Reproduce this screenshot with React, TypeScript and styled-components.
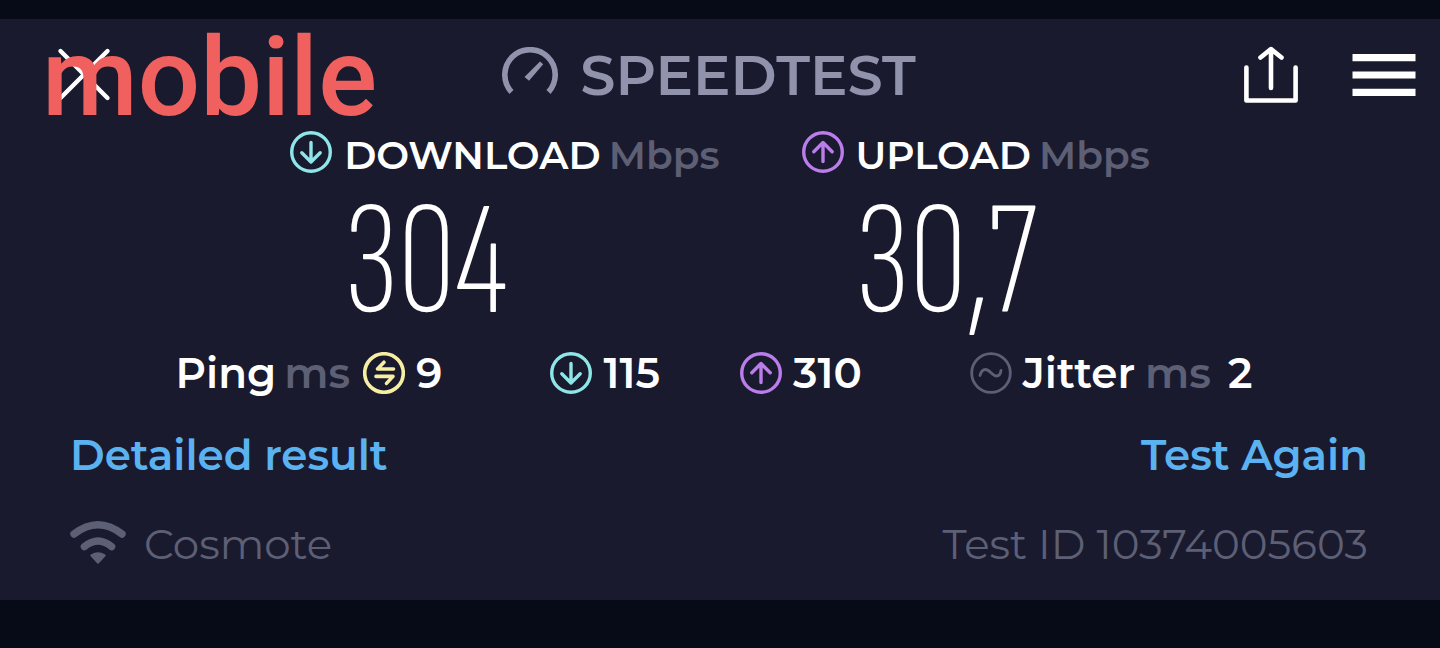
import React from "react";
import styled, { createGlobalStyle } from "styled-components";

const colors = {
  frame: "#070a17",
  panel: "#191a2e",
  white: "#ffffff",
  muted: "#5d5f75",
  brand: "#9193ad",
  cyan: "#8ee6e8",
  purple: "#bb7deb",
  yellow: "#f6eea2",
  link: "#5bb2f1",
  coral: "#ef605e",
};

const GlobalStyle = createGlobalStyle`
  *, *::before, *::after { box-sizing: border-box; }
  body {
    margin: 0;
    background: ${colors.frame};
    color: ${colors.white};
    font-family: Montserrat, Inter, "Liberation Sans", sans-serif;
  }
  svg { display: block; flex: none; }
`;

const Page = styled.div`
  min-height: 100vh;
  padding: 19px 0 48px;
`;

const Panel = styled.main`
  display: flex;
  flex-direction: column;
  background: ${colors.panel};
  padding-bottom: 32px;
`;

const Header = styled.header`
  position: relative;
  display: grid;
  grid-template-columns: 1fr auto 1fr;
  align-items: center;
  height: 112px;
  padding: 0 24px;
`;

const IconButton = styled.button`
  padding: 0;
  border: 0;
  background: none;
  color: ${colors.white};
  cursor: pointer;
`;

const CloseButton = styled(IconButton)`
  justify-self: start;
  margin-left: 32px;
`;

const Overlay = styled.span`
  position: absolute;
  left: 42px;
  top: 4px;
  font: 500 110px/110px Roboto, sans-serif;
  color: ${colors.coral};
  pointer-events: none;
`;

const Brand = styled.h1`
  display: flex;
  align-items: center;
  gap: 22px;
  margin: 0;
  padding-right: 22px;
  font-size: 56px;
  line-height: 64px;
  font-weight: 600;
  color: ${colors.brand};
`;

const Actions = styled.div`
  display: flex;
  align-items: center;
  justify-content: flex-end;
  gap: 53px;
`;

const Speeds = styled.section`
  display: flex;
  justify-content: center;
  gap: 82px;
`;

const SpeedTitle = styled.h2`
  display: flex;
  align-items: flex-end;
  gap: 12px;
  margin: 0;
  font-size: 39px;
  line-height: 36px;
  font-weight: 600;
`;

const SpeedLabel = styled.span`
  display: flex;
  gap: 8px;
`;

const Unit = styled.span`
  color: ${colors.muted};
`;

const SpeedValue = styled.p`
  margin: 0;
  padding: 11px 0 1px 54px;
  font: 200 162px/160px "Sofia Sans Extra Condensed", "Roboto Condensed", Roboto, sans-serif;
`;

const Latency = styled.section`
  display: flex;
  justify-content: center;
  gap: 108px;
  margin-top: 7px;
  padding-right: 12px;
`;

const LatencyGroup = styled.div`
  display: flex;
  gap: 80px;
`;

const Reading = styled.div`
  display: flex;
  align-items: center;
  gap: 11px;
  font-size: 42px;
  line-height: 42px;
  font-weight: 600;
`;

const Caption = styled.span<{ $wide?: boolean }>`
  display: flex;
  gap: ${(p) => (p.$wide ? 10 : 8)}px;
  margin-right: ${(p) => (p.$wide ? 6 : 2)}px;
`;

const Links = styled.nav`
  display: flex;
  justify-content: space-between;
  margin-top: 36px;
  padding: 0 72px 0 70px;
  font-size: 42px;
  line-height: 50px;
  font-weight: 600;
`;

const DetailLink = styled.a`
  color: ${colors.link};
  text-decoration: none;
`;

const AgainButton = styled.button`
  padding: 0;
  border: 0;
  background: none;
  font: inherit;
  color: ${colors.link};
  cursor: pointer;
`;

const Footer = styled.footer`
  display: flex;
  justify-content: space-between;
  margin-top: 40px;
  padding: 0 72px 0 70px;
  font-size: 42px;
  line-height: 48px;
  font-weight: 400;
  color: ${colors.muted};
`;

const Provider = styled.div`
  display: flex;
  gap: 18px;
`;

type Kind = "down" | "up" | "ping" | "jitter";

const marks: Record<Kind, { color: string; width: number; d: string }> = {
  down: { color: colors.cyan, width: 3.4, d: "M21 11.5V30.5M11.8 21.8L21 31L30.2 21.8" },
  up: { color: colors.purple, width: 3.4, d: "M21 30.5V12M11.8 20.7L21 11.5L30.2 20.7" },
  ping: { color: colors.yellow, width: 3.6, d: "M30.5 17H14.5L21 10.2M13 24.4H30L23.5 31.4" },
  jitter: { color: colors.muted, width: 2.8, d: "M10 23.5C11 19.5 13 17.5 15.5 17.5C20 17.5 22 24 26.5 24C29 24 30.5 22 31 18.5" },
};

function Mark({ kind }: { kind: Kind }) {
  const { color, width, d } = marks[kind];
  return (
    <svg width="42" height="42" viewBox="0 0 42 42" fill="none" stroke={color} strokeWidth={width} strokeLinecap="round" strokeLinejoin="round" aria-hidden="true">
      <circle cx="21" cy="21" r="19.3" />
      <path d={d} />
    </svg>
  );
}

function Speed({ kind, label, value }: { kind: Kind; label: string; value: string }) {
  return (
    <div>
      <SpeedTitle>
        <Mark kind={kind} />
        <SpeedLabel>
          {label} <Unit>Mbps</Unit>
        </SpeedLabel>
      </SpeedTitle>
      <SpeedValue>{value}</SpeedValue>
    </div>
  );
}

export default function App() {
  return (
    <>
      <GlobalStyle />
      <Page>
        <Panel>
          <Header>
            <CloseButton type="button" aria-label="Close">
              <svg width="56" height="56" viewBox="0 0 56 56" fill="none" stroke="currentColor" strokeWidth="4.4" strokeLinecap="round">
                <path d="M4.5 4L51.5 51M51.5 4L4.5 51" />
              </svg>
            </CloseButton>
            <Overlay>mobile</Overlay>
            <Brand>
              <svg width="56" height="56" viewBox="0 0 56 56" fill="none" aria-hidden="true">
                <path d="M9.5 45A25.2 25.2 0 1 1 46.5 45" stroke="currentColor" strokeWidth="5.6" />
                <path d="M22.5 30L38 14.5L41.2 17.3L27 33.8Z" fill="currentColor" />
              </svg>
              SPEEDTEST
            </Brand>
            <Actions>
              <IconButton type="button" aria-label="Share">
                <svg width="56" height="58" viewBox="0 0 56 58" fill="none" stroke="currentColor" strokeWidth="4.6" strokeLinecap="round" strokeLinejoin="round">
                  <path d="M3.4 21.5V54.5H52.6V21.5M28 3V42M17.5 11.5L28 3L38.5 11.5" />
                </svg>
              </IconButton>
              <IconButton type="button" aria-label="Menu">
                <svg width="64" height="42" viewBox="0 0 64 42" fill="currentColor">
                  <path d="M0.5 0H63.5V7.2H0.5ZM0.5 17.4H63.5V24.6H0.5ZM0.5 34.8H63.5V42H0.5Z" />
                </svg>
              </IconButton>
            </Actions>
          </Header>

          <Speeds>
            <Speed kind="down" label="DOWNLOAD" value="304" />
            <Speed kind="up" label="UPLOAD" value="30,7" />
          </Speeds>

          <Latency>
            <Reading>
              <Caption>
                Ping <Unit>ms</Unit>
              </Caption>
              <Mark kind="ping" />
              <span>9</span>
            </Reading>
            <LatencyGroup>
              <Reading>
                <Mark kind="down" />
                <span>115</span>
              </Reading>
              <Reading>
                <Mark kind="up" />
                <span>310</span>
              </Reading>
            </LatencyGroup>
            <Reading>
              <Mark kind="jitter" />
              <Caption $wide>
                Jitter <Unit>ms</Unit>
              </Caption>
              <span>2</span>
            </Reading>
          </Latency>

          <Links>
            <DetailLink href="#details">Detailed result</DetailLink>
            <AgainButton type="button">Test Again</AgainButton>
          </Links>

          <Footer>
            <Provider>
              <svg width="56" height="46" viewBox="0 0 56 46" fill="none" stroke="currentColor" strokeWidth="7.4" strokeLinecap="round" aria-hidden="true">
                <path d="M4 14Q28 -4.4 52 14" />
                <path d="M14.4 26.6Q28 15.4 41.6 26.6" />
                <path d="M21.5 35.5Q28 31.5 34.5 35.5L28 42.5Z" fill="currentColor" strokeWidth="2.4" strokeLinejoin="round" />
              </svg>
              <span>Cosmote</span>
            </Provider>
            <span>Test ID 10374005603</span>
          </Footer>
        </Panel>
      </Page>
    </>
  );
}
